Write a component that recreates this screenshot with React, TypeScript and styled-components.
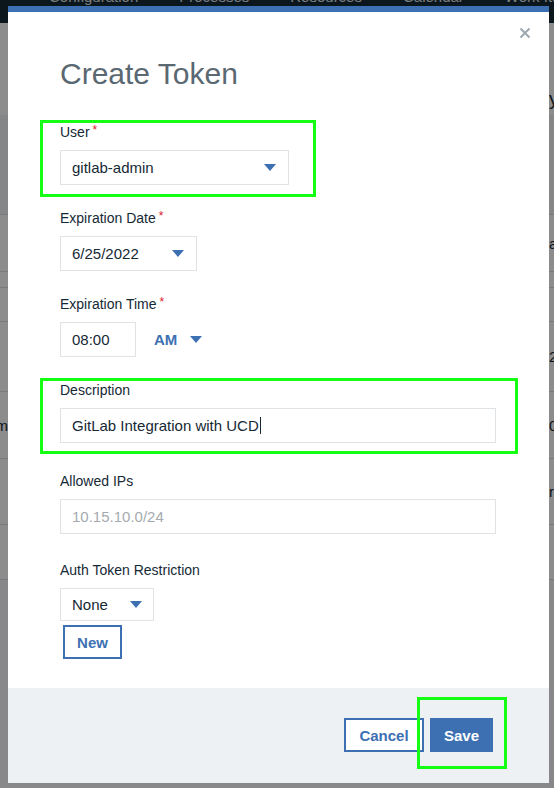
import React from "react";
import styled, { createGlobalStyle } from "styled-components";

const Global = createGlobalStyle`
  html, body { margin: 0; padding: 0; }
  body { font-family: "Liberation Sans", Arial, Helvetica, sans-serif; background: #8c8c8c; }
  * { box-sizing: border-box; }
`;

const BLUE = "#3d70b2";

const Screen = styled.div`
  position: relative;
  width: 554px;
  height: 788px;
  overflow: hidden;
`;

/* ---------- background page ---------- */
const Page = styled.div`
  display: flex;
  flex-direction: column;
  background: #ffffff;
  height: 100%;
`;

const Nav = styled.nav`
  height: 23px;
  background: #152935;
  display: flex;
  gap: 41px;
  padding-left: 49px;
  overflow: hidden;
  white-space: nowrap;
`;

const NavItem = styled.span`
  font-size: 15px;
  line-height: 20px;
  margin-top: -13px;
  color: #dfe3e6;
`;

const Row = styled.div<{ $h: number; $band?: boolean; $line?: boolean }>`
  height: ${(p) => p.$h}px;
  flex: none;
  display: flex;
  align-items: center;
  justify-content: space-between;
  background: ${(p) => (p.$band ? "#f2f4f8" : "#ffffff")};
  border-bottom: ${(p) => (p.$line ? "1px solid #dadde2" : "none")};
`;

const Rest = styled.div`
  flex: 1;
  background: #f8f8fc;
`;

const LeftCell = styled.div`
  width: 8px;
  overflow: hidden;
  display: flex;
  justify-content: flex-end;
  white-space: nowrap;
  font-size: 15px;
  color: #152935;
`;

const RightCell = styled.div<{ $big?: boolean }>`
  width: 5px;
  overflow: hidden;
  white-space: nowrap;
  font-size: ${(p) => (p.$big ? "19px" : "15px")};
  color: #152935;
`;

const Overlay = styled.div`
  position: absolute;
  inset: 0;
  background: rgba(0, 0, 0, 0.45);
`;

/* ---------- modal ---------- */
const Modal = styled.div`
  position: absolute;
  top: 6px;
  left: 8px;
  width: 541px;
  height: 777px;
  background: #ffffff;
  border-top: 6px solid ${BLUE};
  display: flex;
  flex-direction: column;
`;

const Close = styled.button`
  position: absolute;
  top: 15px;
  right: 18px;
  width: 12px;
  height: 12px;
  padding: 0;
  border: none;
  background: none;
  display: flex;
`;

const Body = styled.div`
  flex: 1;
  padding: 44px 52px 0 52px;
  display: flex;
  flex-direction: column;
`;

const Title = styled.h2`
  margin: 0 0 30px 0;
  font-size: 30px;
  line-height: 36px;
  font-weight: 400;
  color: #5a6872;
`;

const Field = styled.div<{ $mb?: number }>`
  display: flex;
  flex-direction: column;
  align-items: flex-start;
  margin-bottom: ${(p) => p.$mb ?? 23}px;
`;

const Label = styled.label`
  font-size: 14px;
  line-height: 20px;
  color: #152935;
  margin-bottom: 8px;
`;

const Req = styled.span`
  color: #e0182d;
  font-size: 12px;
  margin-left: 3px;
  vertical-align: top;
  line-height: 16px;
`;

const SelectBox = styled.div<{ $w: number; $h?: number; $pr?: number }>`
  width: ${(p) => p.$w}px;
  height: ${(p) => p.$h ?? 35}px;
  border: 1px solid #dfe3e6;
  background: #fff;
  display: flex;
  align-items: center;
  justify-content: space-between;
  padding: 0 ${(p) => p.$pr ?? 12}px 0 11px;
  font-size: 15px;
  color: #152935;
`;

const TextBox = styled.div<{ $w: number; $muted?: boolean }>`
  width: ${(p) => p.$w}px;
  height: 35px;
  border: 1px solid #dfe3e6;
  background: #fff;
  display: flex;
  align-items: center;
  padding: 0 11px;
  font-size: 15px;
  color: ${(p) => (p.$muted ? "#a5aab0" : "#152935")};
`;

const Cursor = styled.span`
  display: inline-block;
  width: 1px;
  height: 17px;
  background: #152935;
  margin-left: 1px;
`;

const TimeRow = styled.div`
  display: flex;
  align-items: center;
`;

const Meridiem = styled.div`
  margin-left: 18px;
  display: flex;
  align-items: center;
  gap: 13px;
  font-size: 15px;
  font-weight: 700;
  color: ${BLUE};
`;

const Button = styled.button<{ $primary?: boolean; $w: number }>`
  width: ${(p) => p.$w}px;
  height: 34px;
  padding: 0;
  font-family: inherit;
  font-size: 15px;
  font-weight: 700;
  border: ${(p) => (p.$primary ? "none" : `2px solid ${BLUE}`)};
  background: ${(p) => (p.$primary ? BLUE : "#ffffff")};
  color: ${(p) => (p.$primary ? "#ffffff" : BLUE)};
`;

const NewButton = styled(Button)`
  margin: 4px 0 0 3px;
`;

const Footer = styled.div`
  height: 95px;
  flex: none;
  background: #eef1f4;
  display: flex;
  justify-content: flex-end;
  align-items: flex-start;
  gap: 6px;
  padding: 30px 56px 0 0;
`;

const Highlight = styled.div<{ $x: number; $y: number; $w: number; $h: number }>`
  position: absolute;
  left: ${(p) => p.$x}px;
  top: ${(p) => p.$y}px;
  width: ${(p) => p.$w}px;
  height: ${(p) => p.$h}px;
  border: 3px solid #14ff14;
  pointer-events: none;
`;

const Caret = () => (
  <svg width="12" height="7" viewBox="0 0 12 7">
    <polygon points="0,0 12,0 6,7" fill={BLUE} />
  </svg>
);

export default function App() {
  return (
    <>
      <Global />
      <Screen>
        <Page>
          <Nav>
            <NavItem>Configuration</NavItem>
            <NavItem>Processes</NavItem>
            <NavItem>Resources</NavItem>
            <NavItem>Calendar</NavItem>
            <NavItem>Work Items</NavItem>
          </Nav>
          <Row $h={60}>
            <LeftCell />
            <RightCell />
          </Row>
          <Row $h={32}>
            <LeftCell />
            <RightCell $big>y</RightCell>
          </Row>
          <Row $h={100} $band $line>
            <LeftCell />
            <RightCell />
          </Row>
          <Row $h={57} $line>
            <LeftCell />
            <RightCell>a</RightCell>
          </Row>
          <Row $h={16} $line>
            <LeftCell />
            <RightCell />
          </Row>
          <Row $h={34} $line>
            <LeftCell />
            <RightCell />
          </Row>
          <Row $h={70} $line>
            <LeftCell />
            <RightCell>2</RightCell>
          </Row>
          <Row $h={67} $line>
            <LeftCell>Item m</LeftCell>
            <RightCell>0</RightCell>
          </Row>
          <Row $h={66} $line>
            <LeftCell />
            <RightCell>r</RightCell>
          </Row>
          <Row $h={55} $line>
            <LeftCell />
            <RightCell />
          </Row>
          <Rest />
        </Page>
        <Overlay />

        <Modal>
          <Close aria-label="Close">
            <svg width="12" height="12" viewBox="0 0 12 12">
              <path d="M1.5 1.5 L10.5 10.5 M10.5 1.5 L1.5 10.5" stroke="#9ea8b0" strokeWidth="2" />
            </svg>
          </Close>
          <Body>
            <Title>Create Token</Title>

            <Field>
              <Label>
                User<Req>*</Req>
              </Label>
              <SelectBox $w={229}>
                <span>gitlab-admin</span>
                <Caret />
              </SelectBox>
            </Field>

            <Field>
              <Label>
                Expiration Date<Req>*</Req>
              </Label>
              <SelectBox $w={137}>
                <span>6/25/2022</span>
                <Caret />
              </SelectBox>
            </Field>

            <Field>
              <Label>
                Expiration Time<Req>*</Req>
              </Label>
              <TimeRow>
                <TextBox $w={76}>08:00</TextBox>
                <Meridiem>
                  <span>AM</span>
                  <Caret />
                </Meridiem>
              </TimeRow>
            </Field>

            <Field $mb={28}>
              <Label>Description</Label>
              <TextBox $w={436}>
                GitLab Integration with UCD
                <Cursor />
              </TextBox>
            </Field>

            <Field $mb={26}>
              <Label>Allowed IPs</Label>
              <TextBox $w={436} $muted>
                10.15.10.0/24
              </TextBox>
            </Field>

            <Field $mb={0}>
              <Label>Auth Token Restriction</Label>
              <SelectBox $w={94} $h={33} $pr={11}>
                <span>None</span>
                <Caret />
              </SelectBox>
              <NewButton $w={59}>New</NewButton>
            </Field>
          </Body>
          <Footer>
            <Button $w={80}>Cancel</Button>
            <Button $w={63} $primary>
              Save
            </Button>
          </Footer>
        </Modal>

        <Highlight $x={40} $y={120} $w={276} $h={77} />
        <Highlight $x={40} $y={378} $w={478} $h={76} />
        <Highlight $x={417} $y={697} $w={90} $h={72} />
      </Screen>
    </>
  );
}
